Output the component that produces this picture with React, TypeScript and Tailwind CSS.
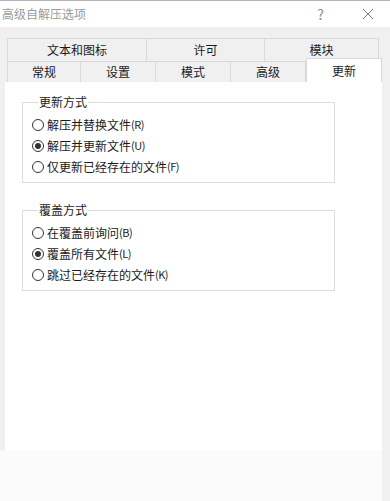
import React from 'react';

const font = { fontFamily: '"Noto Sans CJK SC", "Microsoft YaHei", sans-serif' };

interface Option {
  label: string;
  key: string;
  checked?: boolean;
}

const RadioRow: React.FC<{ opt: Option }> = ({ opt }) => (
  <div className="flex items-center h-[21px] text-[12px] text-[#1a1a1a] leading-none">
    <span className="w-[12px] h-[12px] rounded-full border border-[#333] bg-white flex items-center justify-center mr-[3px]">
      {opt.checked && <span className="w-[6px] h-[6px] rounded-full bg-[#333]" />}
    </span>
    <span>{opt.label}</span>
    <span className="text-[11px] tracking-[-0.5px]">({opt.key})</span>
  </div>
);

const GroupBox: React.FC<{ title: string; options: Option[]; className?: string }> = ({
  title,
  options,
  className,
}) => (
  <fieldset className={`border border-[#dcdcdc] w-[313px] pl-[9px] ${className ?? ''}`}>
    <legend className="ml-[6px] px-[1px] text-[12px] text-[#1a1a1a] leading-[14px]">{title}</legend>
    <div className="flex flex-col pt-[5px] pb-[5px]">
      {options.map((o) => (
        <RadioRow key={o.label} opt={o} />
      ))}
    </div>
  </fieldset>
);

export default function App() {
  const topTabs = [
    { label: '文本和图标', w: 'w-[140px]' },
    { label: '许可', w: 'w-[118px]' },
    { label: '模块', w: 'w-[114px]' },
  ];
  const bottomTabs = [
    { label: '常规', w: 'w-[74px]' },
    { label: '设置', w: 'w-[75px]' },
    { label: '模式', w: 'w-[75px]' },
    { label: '高级', w: 'w-[75px]' },
  ];

  return (
    <div className="w-[390px] h-[501px] bg-white flex flex-col overflow-hidden" style={font}>
      {/* Title bar */}
      <div className="h-[27px] border-t border-[#b5b5b5] flex items-center justify-between shrink-0">
        <span className="pl-[2px] text-[12px] text-[#9a9a9a]">高级自解压选项</span>
        <div className="flex items-center text-[#8a8a8a]">
          <span className="text-[14px] mr-[38px]">?</span>
          <svg width="12" height="12" viewBox="0 0 12 12" className="mr-[16px]">
            <path d="M1 1 L11 11 M11 1 L1 11" stroke="#7a7a7a" strokeWidth="1" />
          </svg>
        </div>
      </div>

      {/* Body */}
      <div className="flex-1 bg-[#f0f0f0] flex flex-col pt-[11px]">
        {/* Tabs */}
        <div className="pl-[7px] flex flex-col text-[12px] text-[#1a1a1a]">
          <div className="flex h-[23px]">
            {topTabs.map((t, i) => (
              <div
                key={t.label}
                className={`${t.w} border-t border-r border-[#d9d9d9] ${i === 0 ? 'border-l' : ''} flex items-center justify-center`}
              >
                {t.label}
              </div>
            ))}
          </div>
          <div className="flex h-[21px] items-end">
            {bottomTabs.map((t, i) => (
              <div
                key={t.label}
                className={`${t.w} h-[21px] border-t border-r border-[#d9d9d9] ${i === 0 ? 'border-l' : ''} flex items-center justify-center`}
              >
                {t.label}
              </div>
            ))}
            <div className="w-[76px] h-[24px] -mt-[3px] bg-white border-t border-r border-l border-[#d9d9d9] flex items-start pt-[3px] justify-center relative z-10">
              更新
            </div>
          </div>
        </div>

        {/* Panel */}
        <div className="flex">
          <div className="ml-[5px] w-[377px] h-[368px] bg-white pl-[17px] pt-[13px] flex flex-col">
            <GroupBox
              title="更新方式"
              options={[
                { label: '解压并替换文件', key: 'R' },
                { label: '解压并更新文件', key: 'U', checked: true },
                { label: '仅更新已经存在的文件', key: 'F' },
              ]}
            />
            <GroupBox
              className="mt-[20px]"
              title="覆盖方式"
              options={[
                { label: '在覆盖前询问', key: 'B' },
                { label: '覆盖所有文件', key: 'L', checked: true },
                { label: '跳过已经存在的文件', key: 'K' },
              ]}
            />
          </div>
        </div>
        <div className="flex-1 flex">
          <div className="flex-1 bg-[#fbfbfb]" />
          <div className="w-[8px] bg-[#f0f0f0]" />
        </div>
      </div>
    </div>
  );
}
